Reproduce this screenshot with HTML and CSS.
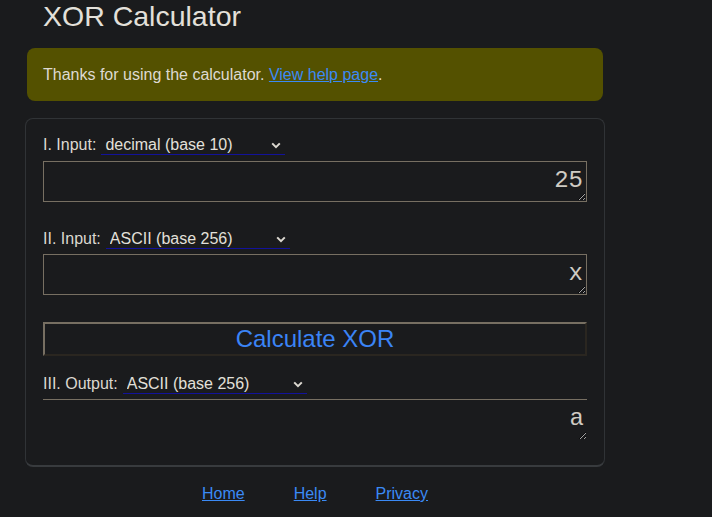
FILE: index.html
```html
<!DOCTYPE html>
<html lang="en">
<head>
<meta charset="utf-8">
<title>XOR Calculator</title>
<link rel="stylesheet" href="styles.css">
</head>
<body>
<div class="page">
  <h1 class="title">XOR Calculator</h1>
  <div class="notice">Thanks for using the calculator. <a href="#" class="link">View help page</a>.</div>
  <form class="card">
    <div class="row">
      <label class="label" for="in1-base">I. Input:</label>
      <span class="select-wrap">
        <select id="in1-base" class="select"><option>decimal (base 10)</option></select>
        <svg class="chevron" width="10" height="7" viewBox="0 0 10 7"><path d="M1.2 1.4 L5 5.2 L8.8 1.4" fill="none" stroke="#dcd8d0" stroke-width="2"/></svg>
      </span>
    </div>
    <textarea class="field">25</textarea>

    <div class="row row-gap">
      <label class="label" for="in2-base">II. Input:</label>
      <span class="select-wrap">
        <select id="in2-base" class="select"><option>ASCII (base 256)</option></select>
        <svg class="chevron" width="10" height="7" viewBox="0 0 10 7"><path d="M1.2 1.4 L5 5.2 L8.8 1.4" fill="none" stroke="#dcd8d0" stroke-width="2"/></svg>
      </span>
    </div>
    <textarea class="field field-2">x</textarea>

    <button type="button" class="calc">Calculate XOR</button>

    <div class="row row-out">
      <label class="label" for="out-base">III. Output:</label>
      <span class="select-wrap">
        <select id="out-base" class="select"><option>ASCII (base 256)</option></select>
        <svg class="chevron" width="10" height="7" viewBox="0 0 10 7"><path d="M1.2 1.4 L5 5.2 L8.8 1.4" fill="none" stroke="#dcd8d0" stroke-width="2"/></svg>
      </span>
    </div>
    <textarea class="field field-2 output" readonly>a</textarea>
  </form>
  <nav class="footer">
    <a href="#" class="link">Home</a>
    <a href="#" class="link">Help</a>
    <a href="#" class="link">Privacy</a>
  </nav>
</div>
</body>
</html>
```
FILE: styles.css
```css
html {
  color-scheme: dark;
}
body {
  margin: 0;
  background: #1a1b1d;
  color: #e8e6e3;
  font-family: "Liberation Sans", Arial, sans-serif;
  font-size: 16px;
}
.page {
  width: 580px;
  margin-left: 25px;
}
.title {
  margin: 0;
  padding-left: 18px;
  font-size: 28.5px;
  font-weight: normal;
  line-height: 32px;
  color: #e3e0da;
}
.notice {
  margin: 16px 2px 0;
  padding: 17px 16px;
  line-height: 19px;
  background: #545100;
  border-radius: 8px;
  color: #dedad2;
}
.link {
  color: #3b8af5;
  text-decoration: underline;
}
.card {
  margin-top: 17px;
  padding: 15px 17px 25px;
  border: 1px solid #303336;
  border-bottom: 2px solid #383b3e;
  border-radius: 8px;
  display: flex;
  flex-direction: column;
}
.row {
  display: flex;
  align-items: flex-start;
  height: 21px;
  margin-bottom: 6px;
}
.row-gap {
  margin-top: 26px;
  margin-bottom: 5px;
}
.row-out {
  margin-top: 17px;
  margin-bottom: 5px;
}
.label {
  line-height: 20px;
  padding-top: 1px;
  margin-right: 5px;
  color: #dcd8d0;
}
.select-wrap {
  position: relative;
  display: inline-block;
  width: 184px;
  height: 21px;
}
.select {
  appearance: none;
  -webkit-appearance: none;
  box-sizing: border-box;
  width: 100%;
  height: 21px;
  margin: 0;
  padding: 0 0 0 4px;
  background: transparent;
  border: none;
  border-bottom: 1px solid #12129a;
  border-radius: 0;
  color: #e3e0da;
  font-family: "Liberation Sans", Arial, sans-serif;
  font-size: 16px;
}
.chevron {
  position: absolute;
  right: 4px;
  top: 8px;
  pointer-events: none;
}
.field {
  display: block;
  box-sizing: border-box;
  width: 100%;
  height: 41px;
  margin: 0;
  padding: 5px 3px 0;
  background: #1a1b1d;
  border: 1px solid #776f62;
  border-radius: 0;
  color: #cfcbc3;
  font-family: "Liberation Mono", "Courier New", monospace;
  font-size: 24px;
  text-align: right;
  overflow: hidden;
}
.output {
  border: none;
  border-top: 1px solid #776f62;
}
.calc {
  margin-top: 27px;
  height: 34px;
  width: 100%;
  padding: 0;
  background: #1a1b1d;
  border: 2px solid;
  border-color: #776f62 #2a2620 #2a2620 #776f62;
  color: #3b84f6;
  font-family: "Liberation Sans", Arial, sans-serif;
  font-size: 24px;
}
.footer {
  margin-top: 18px;
  display: flex;
  justify-content: center;
  gap: 49px;
  line-height: 18px;
}
```
